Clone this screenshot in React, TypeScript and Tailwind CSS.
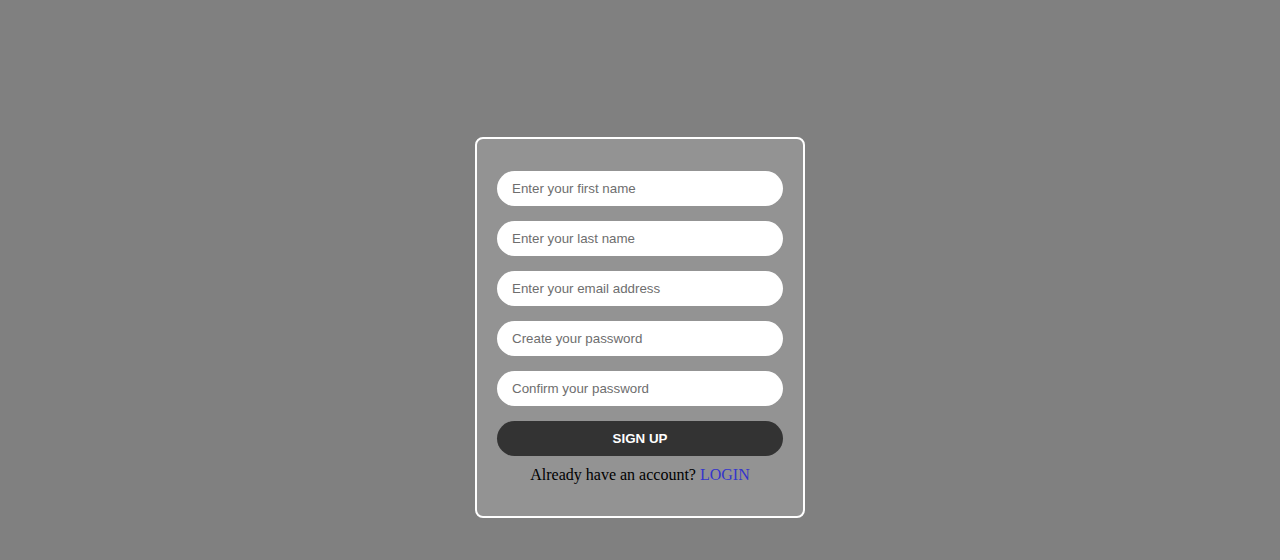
export default function App() {
  const fields = [
    { type: 'text', placeholder: 'Enter your first name' },
    { type: 'text', placeholder: 'Enter your last name' },
    { type: 'email', placeholder: 'Enter your email address' },
    { type: 'password', placeholder: 'Create your password' },
    { type: 'password', placeholder: 'Confirm your password' },
  ];

  return (
    <div className="min-h-[560px] bg-[#808080] flex justify-center pt-[137px]">
      <form
        onSubmit={(e) => e.preventDefault()}
        className="w-[330px] h-[381px] self-start border-2 border-white rounded-[8px] bg-[#939393] px-[20px] pt-[32px] pb-[32px] flex flex-col"
      >
        <div className="flex flex-col gap-[15px]">
          {fields.map((f) => (
            <input
              key={f.placeholder}
              type={f.type}
              placeholder={f.placeholder}
              className="h-[35px] w-full rounded-full bg-white px-[15px] text-[13.333px] text-[#333] placeholder:text-[#6e6e6e] outline-none font-['Liberation_Sans',Arial,sans-serif]"
            />
          ))}
          <button
            type="submit"
            className="h-[35px] w-full rounded-full bg-[#333333] text-white text-[13.333px] font-bold font-['Liberation_Sans',Arial,sans-serif]"
          >
            SIGN UP
          </button>
        </div>
        <p className="mt-[10px] text-center text-[16px] leading-[18px] text-black font-['Liberation_Serif','Times_New_Roman',serif]">
          Already have an account?{' '}
          <a href="#" className="text-[#3535cc]">
            LOGIN
          </a>
        </p>
      </form>
    </div>
  );
}
